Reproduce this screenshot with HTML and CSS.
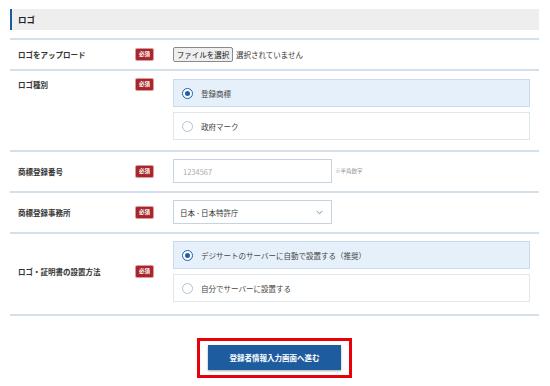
FILE: index.html
```html
<!DOCTYPE html>
<html lang="ja">
<head>
<meta charset="utf-8">
<link rel="stylesheet" href="styles.css">
</head>
<body>
<div class="wrap">
  <div class="section-head">ロゴ</div>
  <div class="rows">
    <div class="row">
      <div class="label">ロゴをアップロード</div>
      <span class="badge">必須</span>
      <div class="field file-field">
        <button class="file-btn" type="button">ファイルを選択</button>
        <span class="file-none">選択されていません</span>
      </div>
    </div>
    <div class="row row-top">
      <div class="label">ロゴ種別</div>
      <span class="badge">必須</span>
      <div class="field options">
        <div class="option selected"><span class="radio"></span>登録商標</div>
        <div class="option"><span class="radio"></span>政府マーク</div>
      </div>
    </div>
    <div class="row row-input">
      <div class="label">商標登録番号</div>
      <span class="badge">必須</span>
      <div class="field inline-field">
        <div class="textbox placeholder">1234567</div>
        <span class="hint">※半角数字</span>
      </div>
    </div>
    <div class="row row-input">
      <div class="label">商標登録事務所</div>
      <span class="badge">必須</span>
      <div class="field inline-field">
        <div class="textbox select">日本 - 日本特許庁
          <svg class="chev" width="7" height="5" viewBox="0 0 7 5"><path d="M0.7 1 L3.5 3.8 L6.3 1" fill="none" stroke="#6a8fb8" stroke-width="1"/></svg>
        </div>
      </div>
    </div>
    <div class="row row-opts">
      <div class="label">ロゴ・証明書の設置方法</div>
      <span class="badge">必須</span>
      <div class="field options">
        <div class="option selected"><span class="radio"></span>デジサートのサーバーに自動で設置する（推奨）</div>
        <div class="option"><span class="radio"></span>自分でサーバーに設置する</div>
      </div>
    </div>
  </div>
  <div class="actions">
    <div class="highlight">
      <button class="submit" type="button">登録者情報入力画面へ進む</button>
    </div>
  </div>
</div>
</body>
</html>
```
FILE: styles.css
```css
* { box-sizing: border-box; }
html, body { margin: 0; padding: 0; background: #fff; }
body {
  font-family: "Noto Sans CJK JP", "Noto Sans", sans-serif;
  font-size: 7.5px;
  color: #333;
}
.wrap {
  width: 529px;
  margin: 9px 0 0 10px;
}
.section-head {
  height: 21px;
  background: #eeeeee;
  border-left: 2px solid #1b5aa0;
  padding-left: 6px;
  font-weight: bold;
  font-size: 8.5px;
  line-height: 21px;
  color: #222;
  margin-bottom: 8px;
}
.rows {
  border-top: 2px solid #d4e0ec;
}
.row {
  display: flex;
  align-items: center;
  border-bottom: 2px solid #d4e0ec;
  padding: 0 9px 0 8px;
  min-height: 31px;
}
.row-top {
  align-items: flex-start;
  padding-top: 8px;
  padding-bottom: 10px;
}
.row-top .label { margin-top: 0; }
.row-top .badge { margin-top: 0; }
.row-input { padding-top: 7px; padding-bottom: 8px; }
.row-opts { padding-top: 7px; padding-bottom: 12px; }
.label {
  width: 118px;
  flex: none;
  font-weight: bold;
  color: #333;
}
.badge {
  flex: none;
  width: 17px;
  height: 11px;
  background: #a8262b;
  color: #fff;
  font-size: 5.5px;
  font-weight: bold;
  line-height: 11px;
  text-align: center;
  border-radius: 1px;
  box-shadow: 0 0 0 1px #d99a9c;
}
.field {
  margin-left: 20px;
  flex: 1;
}
.file-field {
  display: flex;
  align-items: center;
  gap: 3px;
}
.file-btn {
  font-family: inherit;
  font-size: 7.5px;
  color: #111;
  height: 15px;
  width: 60px;
  padding: 0;
  background: #efefef;
  border: 1px solid #8a8a8a;
  border-radius: 2px;
}
.file-none { color: #333; }
.options {
  display: flex;
  flex-direction: column;
  gap: 5px;
}
.option {
  height: 28px;
  border: 1px solid #dde7f0;
  background: #fff;
  display: flex;
  align-items: center;
  padding-left: 8px;
  color: #444;
}
.option.selected {
  background: #e6f0fa;
  border-color: #c7daee;
}
.radio {
  width: 11px;
  height: 11px;
  border-radius: 50%;
  border: 1px solid #b5c2cf;
  background: #fff;
  margin-right: 8px;
  flex: none;
  position: relative;
}
.option.selected .radio {
  border: 1.5px solid #1f5fa8;
}
.option.selected .radio::after {
  content: "";
  position: absolute;
  left: 50%;
  top: 50%;
  width: 5px;
  height: 5px;
  margin: -2.5px 0 0 -2.5px;
  border-radius: 50%;
  background: #1f5fa8;
}
.inline-field {
  display: flex;
  align-items: center;
}
.textbox {
  width: 159px;
  height: 24px;
  border: 1px solid #c5d4e3;
  background: #fff;
  display: flex;
  align-items: center;
  padding-left: 6px;
  color: #333;
}
.placeholder { color: #aaa; padding-left: 9px; }
.select { justify-content: space-between; padding-right: 8px; }
.hint {
  margin-left: 3px;
  font-size: 5.5px;
  color: #999;
}
.actions {
  display: flex;
  justify-content: center;
  padding-top: 22px;
}
.highlight {
  border: 3px solid #e8000b;
  padding: 4px 8px 5px;
}
.submit {
  display: block;
  width: 133px;
  height: 25px;
  background: #1d5c9f;
  border: none;
  color: #fff;
  font-family: inherit;
  font-weight: bold;
  font-size: 7.5px;
  box-shadow: 0 1px 2px rgba(0,0,0,0.35);
  padding: 0;
}
```
